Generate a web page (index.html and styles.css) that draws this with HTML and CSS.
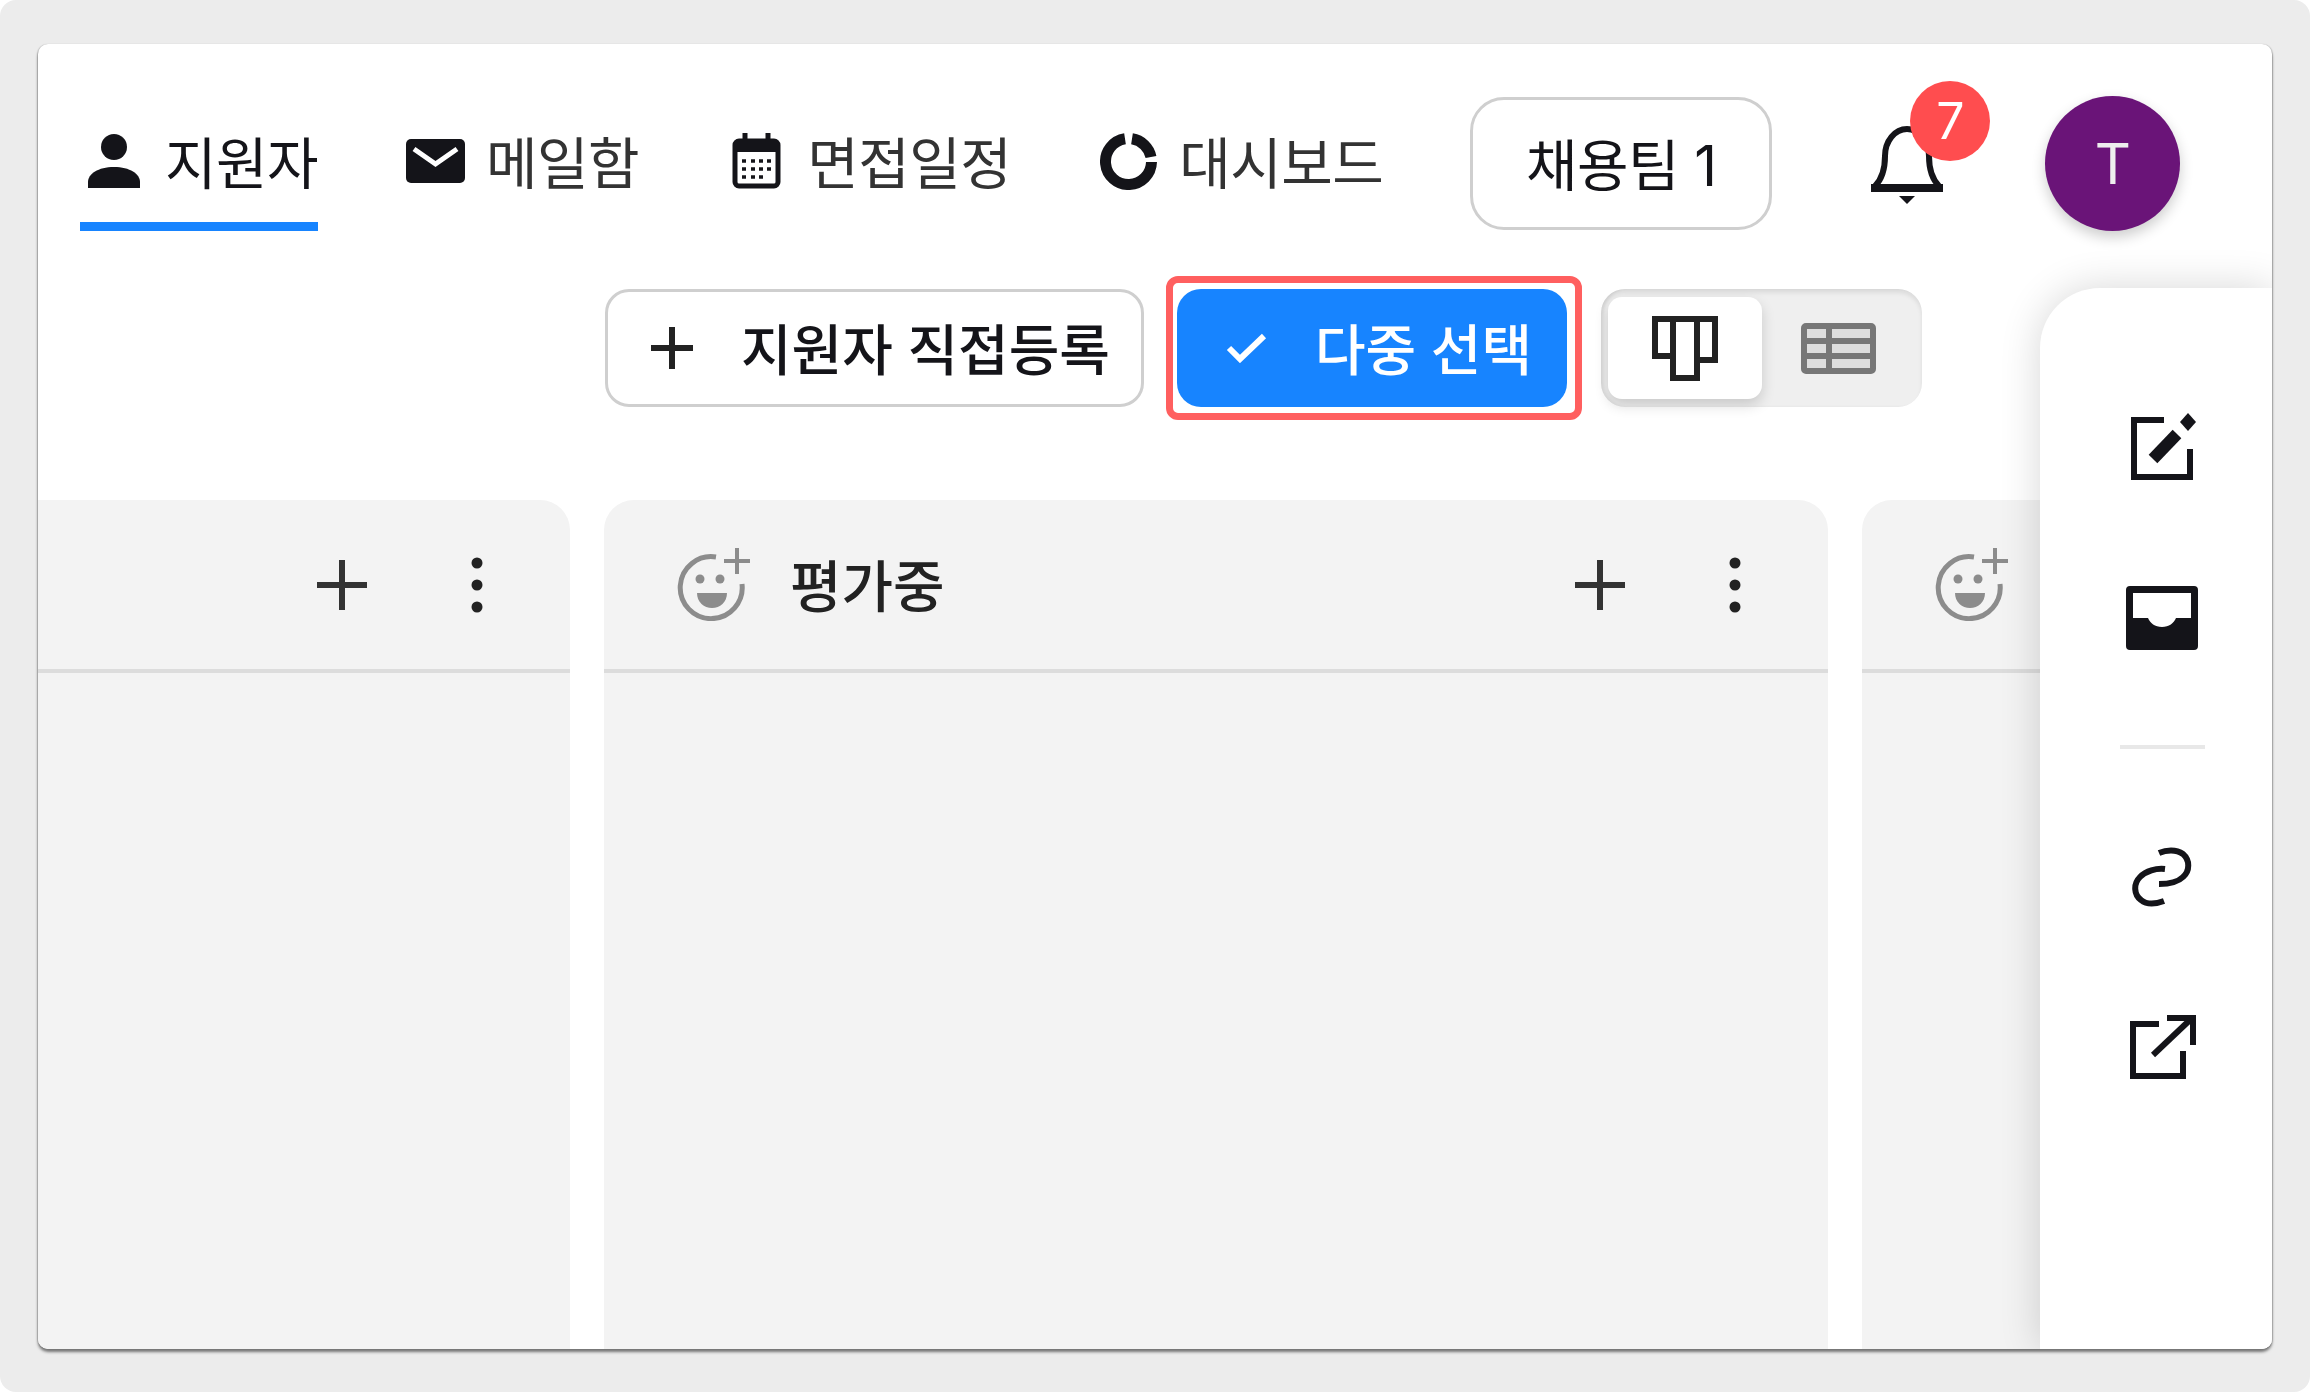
FILE: index.html
```html
<!DOCTYPE html>
<html lang="ko">
<head>
    <meta charset="UTF-8">
    <title>지원자 칸반</title>
    <link rel="stylesheet" href="styles.css">
</head>
<body>
    <div class="card">
        <!-- Top navigation -->
        <header class="top-nav">
            <a class="tab active">
                <span class="tab-icon">
                    <svg width="52" height="54" viewBox="0 0 52 54"><circle cx="26" cy="13" r="13" fill="currentColor"/><path d="M0 54V48C0 40 10 33 26 33S52 40 52 48V54Z" fill="currentColor"/></svg>
                </span>
                지원자
            </a>
            <a class="tab">
                <span class="tab-icon">
                    <svg width="59" height="44" viewBox="0 0 59 44"><rect width="59" height="44" rx="5" fill="#141419"/><path d="M8 10L29.5 25L51 10" fill="none" stroke="#fff" stroke-width="5"/></svg>
                </span>
                메일함
            </a>
            <a class="tab">
                <span class="tab-icon">
                    <svg width="49" height="56" viewBox="0 0 49 56" fill="none" stroke="#141419" stroke-width="5"><rect x="3" y="8" width="43" height="45" rx="4"/><path d="M3 14H46" stroke-width="10"/><path d="M13 0V9M36 0V9"/><path d="M10 28h4M19 28h4M27 28h4M35 28h4M10 36h4M19 36h4M27 36h4M35 36h4M10 44h4M19 44h4M27 44h4" stroke-width="3.5"/></svg>
                </span>
                면접일정
            </a>
            <a class="tab">
                <span class="tab-icon">
                    <svg width="57" height="57" viewBox="0 0 57 57" fill="none" stroke="#141419" stroke-width="11"><path d="M32 5.8A23 23 0 0 1 51 24"/><path d="M51.5 29A23 23 0 1 1 25 5.8"/></svg>
                </span>
                대시보드
            </a>
            <button class="team-btn">채용팀 1</button>
            <div class="bell">
                <svg width="78" height="80" viewBox="0 0 78 80" fill="none" stroke="#141419" stroke-width="6"><path d="M7 62C15 54 17 44 17 32C17 17 27 5 39 5C51 5 61 17 61 32C61 44 63 54 71 62"/><path d="M3 64H75" stroke-width="8"/><path d="M31 72H47L39 80Z" fill="#141419" stroke="none"/></svg>
                <span class="badge">7</span>
            </div>
            <div class="avatar">T</div>
        </header>

        <!-- Toolbar -->
        <div class="toolbar">
            <button class="btn btn-outline">
                <svg width="42" height="42" viewBox="0 0 42 42" stroke="#222" stroke-width="6"><path d="M21 0V42M0 21H42"/></svg>
                지원자 직접등록
            </button>
            <div class="highlight">
                <button class="btn btn-primary">
                    <svg width="41" height="30" viewBox="0 0 41 30" fill="none" stroke="#fff" stroke-width="6"><path d="M3 15L14 26L38 3"/></svg>
                    다중 선택
                </button>
            </div>
            <div class="view-toggle">
                <div class="view-opt selected">
                    <svg width="66" height="68" viewBox="0 0 66 68" fill="none" stroke="#222" stroke-width="6"><path d="M3 5H63V46H45V64H21V42H3Z"/><path d="M21 5V42M45 5V46"/></svg>
                </div>
                <div class="view-opt">
                    <svg width="75" height="51" viewBox="0 0 75 51" fill="#ddd" stroke="#777" stroke-width="6"><rect x="3" y="3" width="69" height="45" rx="2"/><path d="M3 18H72M3 33H72M28 3V48"/></svg>
                </div>
            </div>
        </div>

        <!-- Kanban board -->
        <section class="board">
            <div class="column column-first">
                <div class="column-head">
                    <div class="column-actions">
                        <svg width="50" height="50" viewBox="0 0 50 50" stroke="#333" stroke-width="6"><path d="M25 0V50M0 25H50"/></svg>
                        <svg class="dots" width="12" height="60" viewBox="0 0 12 60" fill="#222"><circle cx="6" cy="8" r="5.5"/><circle cx="6" cy="30" r="5.5"/><circle cx="6" cy="52" r="5.5"/></svg>
                    </div>
                </div>
            </div>
            <div class="column">
                <div class="column-head">
                    <svg class="smile" width="74" height="75" viewBox="0 0 74 75" fill="none" stroke="#8c8c8c" stroke-width="5"><path d="M40 11A31 31 0 1 0 66 38"/><path d="M48 15H74M61 2V28" stroke-width="4"/><circle cx="24" cy="33" r="4.5" fill="#8c8c8c" stroke="none"/><circle cx="44" cy="33" r="4.5" fill="#8c8c8c" stroke="none"/><path d="M21 47H51C51 56 44 62 36 62S21 56 21 47Z" fill="#8c8c8c" stroke="none"/></svg>
                    <h3 class="column-title">평가중</h3>
                    <div class="column-actions">
                        <svg width="50" height="50" viewBox="0 0 50 50" stroke="#333" stroke-width="6"><path d="M25 0V50M0 25H50"/></svg>
                        <svg class="dots" width="12" height="60" viewBox="0 0 12 60" fill="#222"><circle cx="6" cy="8" r="5.5"/><circle cx="6" cy="30" r="5.5"/><circle cx="6" cy="52" r="5.5"/></svg>
                    </div>
                </div>
            </div>
            <div class="column">
                <div class="column-head">
                    <svg class="smile" width="74" height="75" viewBox="0 0 74 75" fill="none" stroke="#8c8c8c" stroke-width="5"><path d="M40 11A31 31 0 1 0 66 38"/><path d="M48 15H74M61 2V28" stroke-width="4"/><circle cx="24" cy="33" r="4.5" fill="#8c8c8c" stroke="none"/><circle cx="44" cy="33" r="4.5" fill="#8c8c8c" stroke="none"/><path d="M21 47H51C51 56 44 62 36 62S21 56 21 47Z" fill="#8c8c8c" stroke="none"/></svg>
                </div>
            </div>
        </section>

        <!-- Side action rail, sits over the board -->
        <aside class="side-rail">
            <div class="rail-btn">
                <svg width="69" height="71" viewBox="0 0 69 71" fill="none" stroke="#141419" stroke-width="6"><path d="M36 9H6V66H62V38"/><path d="M25 48L49 23" stroke-width="12"/><path d="M60 2L68 11L60 20L52 11Z" fill="#141419" stroke="none"/></svg>
            </div>
            <div class="rail-btn">
                <svg width="76" height="68" viewBox="0 0 76 68"><path fill-rule="evenodd" d="M6 2H70Q74 2 74 6V62Q74 66 70 66H6Q2 66 2 62V6Q2 2 6 2ZM9 9V34H24C26 39 31 43 38 43S50 39 52 34H67V9Z" fill="#141419"/></svg>
            </div>
            <div class="rail-divider"></div>
            <div class="rail-btn">
                <svg width="60" height="60" viewBox="0 0 60 60" fill="none" stroke="#141419" stroke-width="6"><path d="M27 6C34 3 44 2 51 7C58 13 58 24 51 30C46 35 38 37 27 37"/><path d="M33 22C24 21 14 24 8 30C1 37 2 48 9 53C15 58 24 57 32 54"/></svg>
            </div>
            <div class="rail-btn">
                <svg width="68" height="67" viewBox="0 0 68 67" fill="none" stroke="#141419" stroke-width="6"><path d="M31 10H5V62H55V37"/><path d="M25 41L63 5"/><path d="M39 4H65V31"/></svg>
            </div>
        </aside>
    </div>
</body>
</html>
```

FILE: styles.css
```css
:root {
    --ink: #141419; --line: #cfcfcf; --blue: #1784ff; --panel: #f3f3f3;
    --font-family: 'Inter', 'Noto Sans CJK KR', 'Noto Sans', sans-serif;
}
* { margin: 0; padding: 0; box-sizing: border-box; }
html { background-color: #fff; }
body { height: 1392px; padding: 44px 38px 43px; background-color: #ececec; border-radius: 16px; font-family: var(--font-family); color: var(--ink); overflow: hidden; }
svg { display: block; flex-shrink: 0; }
button { font-family: inherit; color: inherit; background: none; cursor: pointer; }

.card { position: relative; height: 100%; display: flex; flex-direction: column; background-color: #fff; border-radius: 10px; overflow: hidden; box-shadow: 0 3px 3px rgba(0,0,0,0.5), 1px 0 1px rgba(0,0,0,0.15), -1px 0 1px rgba(0,0,0,0.15); }

.top-nav { display: flex; align-items: center; gap: 83px; padding: 52px 0 0 42px; }
.tab { display: flex; align-items: center; gap: 21px; height: 134px; padding: 10px 0 0 4px; border-bottom: 9px solid transparent; font-size: 56px; line-height: 1; letter-spacing: -0.5px; color: #333; white-space: nowrap; }
.tab.active { border-bottom-color: var(--blue); color: var(--ink); }
.tab-icon { width: 60px; margin-top: -6px; display: flex; justify-content: center; }
.team-btn { width: 302px; height: 133px; margin-left: 4px; padding-bottom: 5px; border: 3px solid var(--line); border-radius: 34px; font-size: 56px; letter-spacing: -0.5px; white-space: nowrap; }
.bell { position: relative; width: 78px; height: 80px; margin-left: 13px; }
.badge { position: absolute; top: -43px; left: 42px; width: 80px; height: 80px; display: flex; align-items: center; justify-content: center; border-radius: 50%; background-color: #ff4d4f; color: #fff; font-size: 50px; line-height: 1; }
.avatar { width: 135px; height: 135px; margin-left: 16px; display: flex; align-items: center; justify-content: center; border-radius: 50%; background-color: #6a1478; color: #eee; font-size: 56px; line-height: 1; box-shadow: 0 6px 14px rgba(0,0,0,0.2); }

.toolbar { display: flex; align-items: center; justify-content: flex-end; gap: 19px; margin-top: 45px; padding-right: 350px; }
.btn { display: flex; align-items: center; height: 118px; padding-bottom: 4px; border-radius: 24px; font-size: 55px; font-weight: 500; white-space: nowrap; }
.btn svg { margin-top: 4px; }
.btn-outline { width: 539px; margin-right: 3px; padding-left: 43px; gap: 48px; border: 3px solid var(--line); }
.btn-primary { width: 390px; padding-left: 49px; gap: 48px; border: none; background-color: var(--blue); color: #fff; }
.highlight { padding: 6px 8px 6px 4px; border: 7px solid #ff5f5f; border-radius: 12px; }
.view-toggle { display: flex; width: 321px; height: 118px; padding: 8px 7px; background-color: #efefef; border-radius: 24px; box-shadow: inset 0 4px 4px rgba(0,0,0,0.08), inset 3px 0 3px rgba(0,0,0,0.06); }
.view-opt { display: flex; align-items: center; justify-content: center; width: 154px; border-radius: 14px; }
.view-opt + .view-opt { flex: 1; }
.view-opt.selected { background-color: #fff; box-shadow: 0 6px 14px rgba(0,0,0,0.16); }

.board { flex: 1; display: flex; gap: 34px; margin-top: 80px; min-height: 0; }
.column { flex: 0 0 1224px; background-color: var(--panel); border-radius: 30px 30px 0 0; }
.column-first { margin-left: -692px; }
.column-head { display: flex; align-items: center; height: 173px; padding-left: 72px; border-bottom: 4px solid #dcdcdc; }
.column-title { margin: -5px 0 0 40px; font-size: 56px; font-weight: 500; color: #222; }
.column-actions { display: flex; align-items: center; gap: 104px; margin-left: auto; padding-right: 87px; }
.smile { margin-top: -2px; }

.side-rail { position: absolute; top: 244px; right: 0; bottom: 0; width: 232px; display: flex; flex-direction: column; padding: 73px 0 0 12px; background-color: #fff; border-top-left-radius: 60px; box-shadow: 0 0 40px rgba(0,0,0,0.16); }
.rail-btn { display: flex; align-items: center; justify-content: center; height: 171px; }
.rail-divider { height: 4px; margin: 42px 67px 42px 68px; background-color: #e8e8e8; }
```
